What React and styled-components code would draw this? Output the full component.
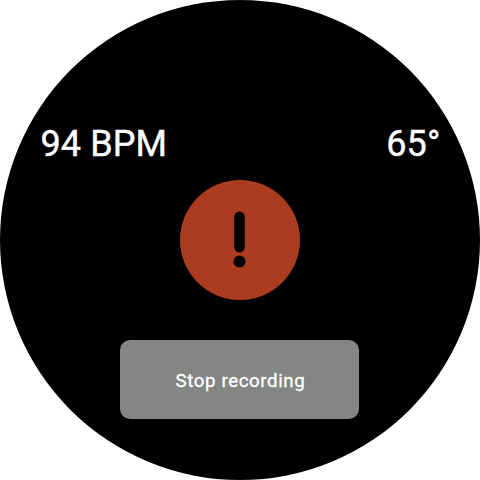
import React from 'react';
import styled, { createGlobalStyle } from 'styled-components';

const GlobalStyle = createGlobalStyle`
  body {
    margin: 0;
    background: #fff;
  }
`;

const WatchFace = styled.main`
  display: flex;
  flex-direction: column;
  align-items: center;
  box-sizing: border-box;
  width: 480px;
  height: 480px;
  padding-top: 123px;
  border-radius: 50%;
  background: #000;
  color: #fff;
  font-family: Roboto, sans-serif;
`;

const Readings = styled.div`
  display: flex;
  justify-content: space-between;
  width: 400px;
  height: 42px;
  margin-left: 1px;
`;

const Reading = styled.span`
  font-size: 36px;
  line-height: 42px;
  letter-spacing: 0.1px;
  white-space: pre;
  -webkit-text-stroke: 0.4px #fff;
`;

const AlertIcon = styled.svg`
  display: block;
  width: 120px;
  height: 120px;
  margin-top: 15px;
`;

const StopButton = styled.button`
  width: 239px;
  height: 79px;
  margin: 40px 1px 0 0;
  padding: 2px 0 0 2px;
  border: none;
  border-radius: 10px;
  background: #848683;
  color: #fff;
  font-family: inherit;
  font-size: 18.7px;
  letter-spacing: 0.6px;
  -webkit-text-stroke: 0.3px #fff;
  cursor: pointer;
`;

const App = () => {
  return (
    <>
      <GlobalStyle />
      <WatchFace>
        <Readings>
          <Reading>94 BPM</Reading>
          <Reading>65°</Reading>
        </Readings>
        <AlertIcon viewBox='0 0 120 120'>
          <circle cx='60' cy='60' r='60' fill='#ac3c20' />
          <rect x='54.2' y='31.5' width='10.6' height='41' rx='5.3' />
          <circle cx='59.5' cy='81.5' r='6' />
        </AlertIcon>
        <StopButton>Stop recording</StopButton>
      </WatchFace>
    </>
  );
};

export default App;
